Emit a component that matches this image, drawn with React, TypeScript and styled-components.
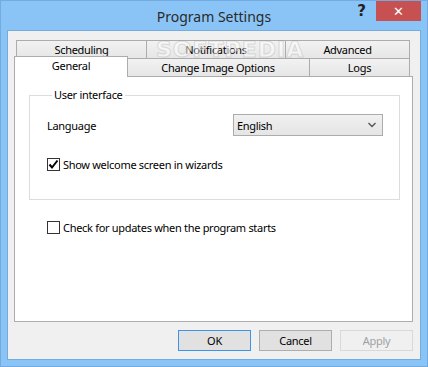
import React from "react";
import styled, { createGlobalStyle } from "styled-components";

const Global = createGlobalStyle`
  html, body { margin: 0; padding: 0; }
  body {
    width: 428px;
    height: 367px;
    overflow: hidden;
    font-family: "Noto Sans", "Open Sans", sans-serif;
    font-size: 11px;
    letter-spacing: -0.3px;
    color: #000;
  }
  * { box-sizing: border-box; }
`;

const Window = styled.div`
  position: relative;
  width: 428px;
  height: 367px;
  background: #8ac4f6;
  border: 1px solid #72abdf;
  padding: 0 6px 6px 6px;
  display: flex;
  flex-direction: column;
`;

const TitleBar = styled.div`
  height: 29px;
  display: grid;
  grid-template-columns: 1fr auto 1fr;
  align-items: center;
`;

const Title = styled.div`
  grid-column: 2;
  font-size: 14px;
  letter-spacing: 0;
  color: #2a2a2a;
  padding-top: 1px;
`;

const Controls = styled.div`
  grid-column: 3;
  align-self: start;
  justify-self: end;
  display: flex;
`;

const CtrlButton = styled.div<{ $close?: boolean }>`
  width: ${(p) => (p.$close ? 45 : 29)}px;
  height: 20px;
  display: flex;
  align-items: center;
  justify-content: center;
  background: ${(p) => (p.$close ? "#c75050" : "transparent")};
  color: ${(p) => (p.$close ? "#fff" : "#222")};
  font-family: "DejaVu Sans", sans-serif;
  font-weight: bold;
  letter-spacing: 0;
  font-size: ${(p) => (p.$close ? 13 : 15)}px;
`;

const Client = styled.div`
  flex: 1;
  background: #f0f0f0;
  border: 1px solid #74acde;
  padding: 9px 7px 8px 6px;
  display: flex;
  flex-direction: column;
`;

const TabControl = styled.div`
  position: relative;
  display: flex;
  flex-direction: column;
`;

const TabStrip = styled.div`
  display: flex;
  flex-direction: column;
  padding: 0 3px 0 2px;
`;

const TabRow = styled.div`
  height: 18px;
  display: flex;
  align-items: flex-start;
`;

const Tab = styled.div<{ $w: number; $selected?: boolean }>`
  width: ${(p) => p.$w + (p.$selected ? 3 : 0)}px;
  height: ${(p) => (p.$selected ? 21 : 18)}px;
  margin: ${(p) => (p.$selected ? "-2px -1px 0 -2px" : "0 0 0 -1px")};
  &:first-child {
    margin-left: ${(p) => (p.$selected ? -2 : 0)}px;
  }
  position: relative;
  z-index: ${(p) => (p.$selected ? 2 : 1)};
  display: flex;
  align-items: center;
  justify-content: center;
  padding-bottom: ${(p) => (p.$selected ? 3 : 0)}px;
  border: 1px solid #acacac;
  border-bottom: none;
  background: ${(p) =>
    p.$selected ? "#ffffff" : "linear-gradient(#f2f2f2, #e6e6e6)"};
  white-space: nowrap;
`;

const Watermark = styled.div`
  position: absolute;
  left: 142px;
  top: -3px;
  font-family: "DejaVu Sans", sans-serif;
  font-weight: bold;
  font-size: 22px;
  letter-spacing: 1px;
  color: rgba(255, 255, 255, 0.5);
  -webkit-text-stroke: 1px rgba(150, 150, 150, 0.3);
  pointer-events: none;
  z-index: 3;
`;

const Panel = styled.div`
  height: 246px;
  background: #fff;
  border: 1px solid #adadad;
  padding: 10px 12px 0 14px;
  display: flex;
  flex-direction: column;
`;

const GroupBox = styled.fieldset`
  margin: 0;
  padding: 11px 16px 27px 17px;
  border: 1px solid #dcdcdc;
  display: flex;
  flex-direction: column;
  gap: 20px;
`;

const Legend = styled.legend`
  margin-left: 5px;
  padding: 0 2px;
  line-height: 16px;
`;

const FieldRow = styled.div`
  display: flex;
  align-items: center;
  justify-content: space-between;
`;

const Combo = styled.div`
  width: 150px;
  height: 22px;
  border: 1px solid #acacac;
  background: linear-gradient(#f0f0f0, #e5e5e5);
  display: flex;
  align-items: center;
  justify-content: space-between;
  padding: 0 6px 0 3px;
`;

const CheckRow = styled.label<{ $indent?: number; $top?: number }>`
  display: flex;
  align-items: center;
  gap: 3px;
  height: 16px;
  margin-left: ${(p) => p.$indent ?? 0}px;
  margin-top: ${(p) => p.$top ?? 0}px;
`;

const Box = styled.span`
  width: 13px;
  height: 13px;
  border: 1px solid #333;
  background: #fff;
  display: flex;
  align-items: center;
  justify-content: center;
`;

const ButtonRow = styled.div`
  margin-top: 8px;
  display: flex;
  justify-content: flex-end;
  gap: 8px;
`;

const Button = styled.div<{ $default?: boolean; $disabled?: boolean }>`
  width: 73px;
  height: 21px;
  display: flex;
  align-items: center;
  justify-content: center;
  border: 1px solid
    ${(p) => (p.$default ? "#3d95e8" : p.$disabled ? "#d9d9d9" : "#adadad")};
  background: ${(p) => (p.$disabled ? "#f0f0f0" : "#e1e1e1")};
  color: ${(p) => (p.$disabled ? "#a0a0a0" : "#000")};
`;

const Check = () => (
  <svg width="11" height="11" viewBox="0 0 11 11">
    <path d="M1.5 5.5 L4 8.5 L9.5 1.5" fill="none" stroke="#000" strokeWidth="2" />
  </svg>
);

const Chevron = () => (
  <svg width="8" height="6" viewBox="0 0 8 6">
    <path d="M0.5 1 L4 4.5 L7.5 1" fill="none" stroke="#555" strokeWidth="1.4" />
  </svg>
);

export default function App() {
  return (
    <>
      <Global />
      <Window>
        <TitleBar>
          <Title>Program Settings</Title>
          <Controls>
            <CtrlButton>?</CtrlButton>
            <CtrlButton $close>✕</CtrlButton>
          </Controls>
        </TitleBar>
        <Client>
          <TabControl>
            <TabStrip>
              <TabRow>
                <Tab $w={131}>Scheduling</Tab>
                <Tab $w={140}>Notifications</Tab>
                <Tab $w={125}>Advanced</Tab>
              </TabRow>
              <TabRow>
                <Tab $w={111} $selected>
                  General
                </Tab>
                <Tab $w={184}>Change Image Options</Tab>
                <Tab $w={101}>Logs</Tab>
              </TabRow>
            </TabStrip>
            <Watermark>SOFTPEDIA</Watermark>
            <Panel>
              <GroupBox>
                <Legend>User interface</Legend>
                <FieldRow>
                  <span>Language</span>
                  <Combo>
                    <span>English</span>
                    <Chevron />
                  </Combo>
                </FieldRow>
                <CheckRow>
                  <Box>
                    <Check />
                  </Box>
                  Show welcome screen in wizards
                </CheckRow>
              </GroupBox>
              <CheckRow $indent={18} $top={19}>
                <Box />
                Check for updates when the program starts
              </CheckRow>
            </Panel>
          </TabControl>
          <ButtonRow>
            <Button $default>OK</Button>
            <Button>Cancel</Button>
            <Button $disabled>Apply</Button>
          </ButtonRow>
        </Client>
      </Window>
    </>
  );
}
